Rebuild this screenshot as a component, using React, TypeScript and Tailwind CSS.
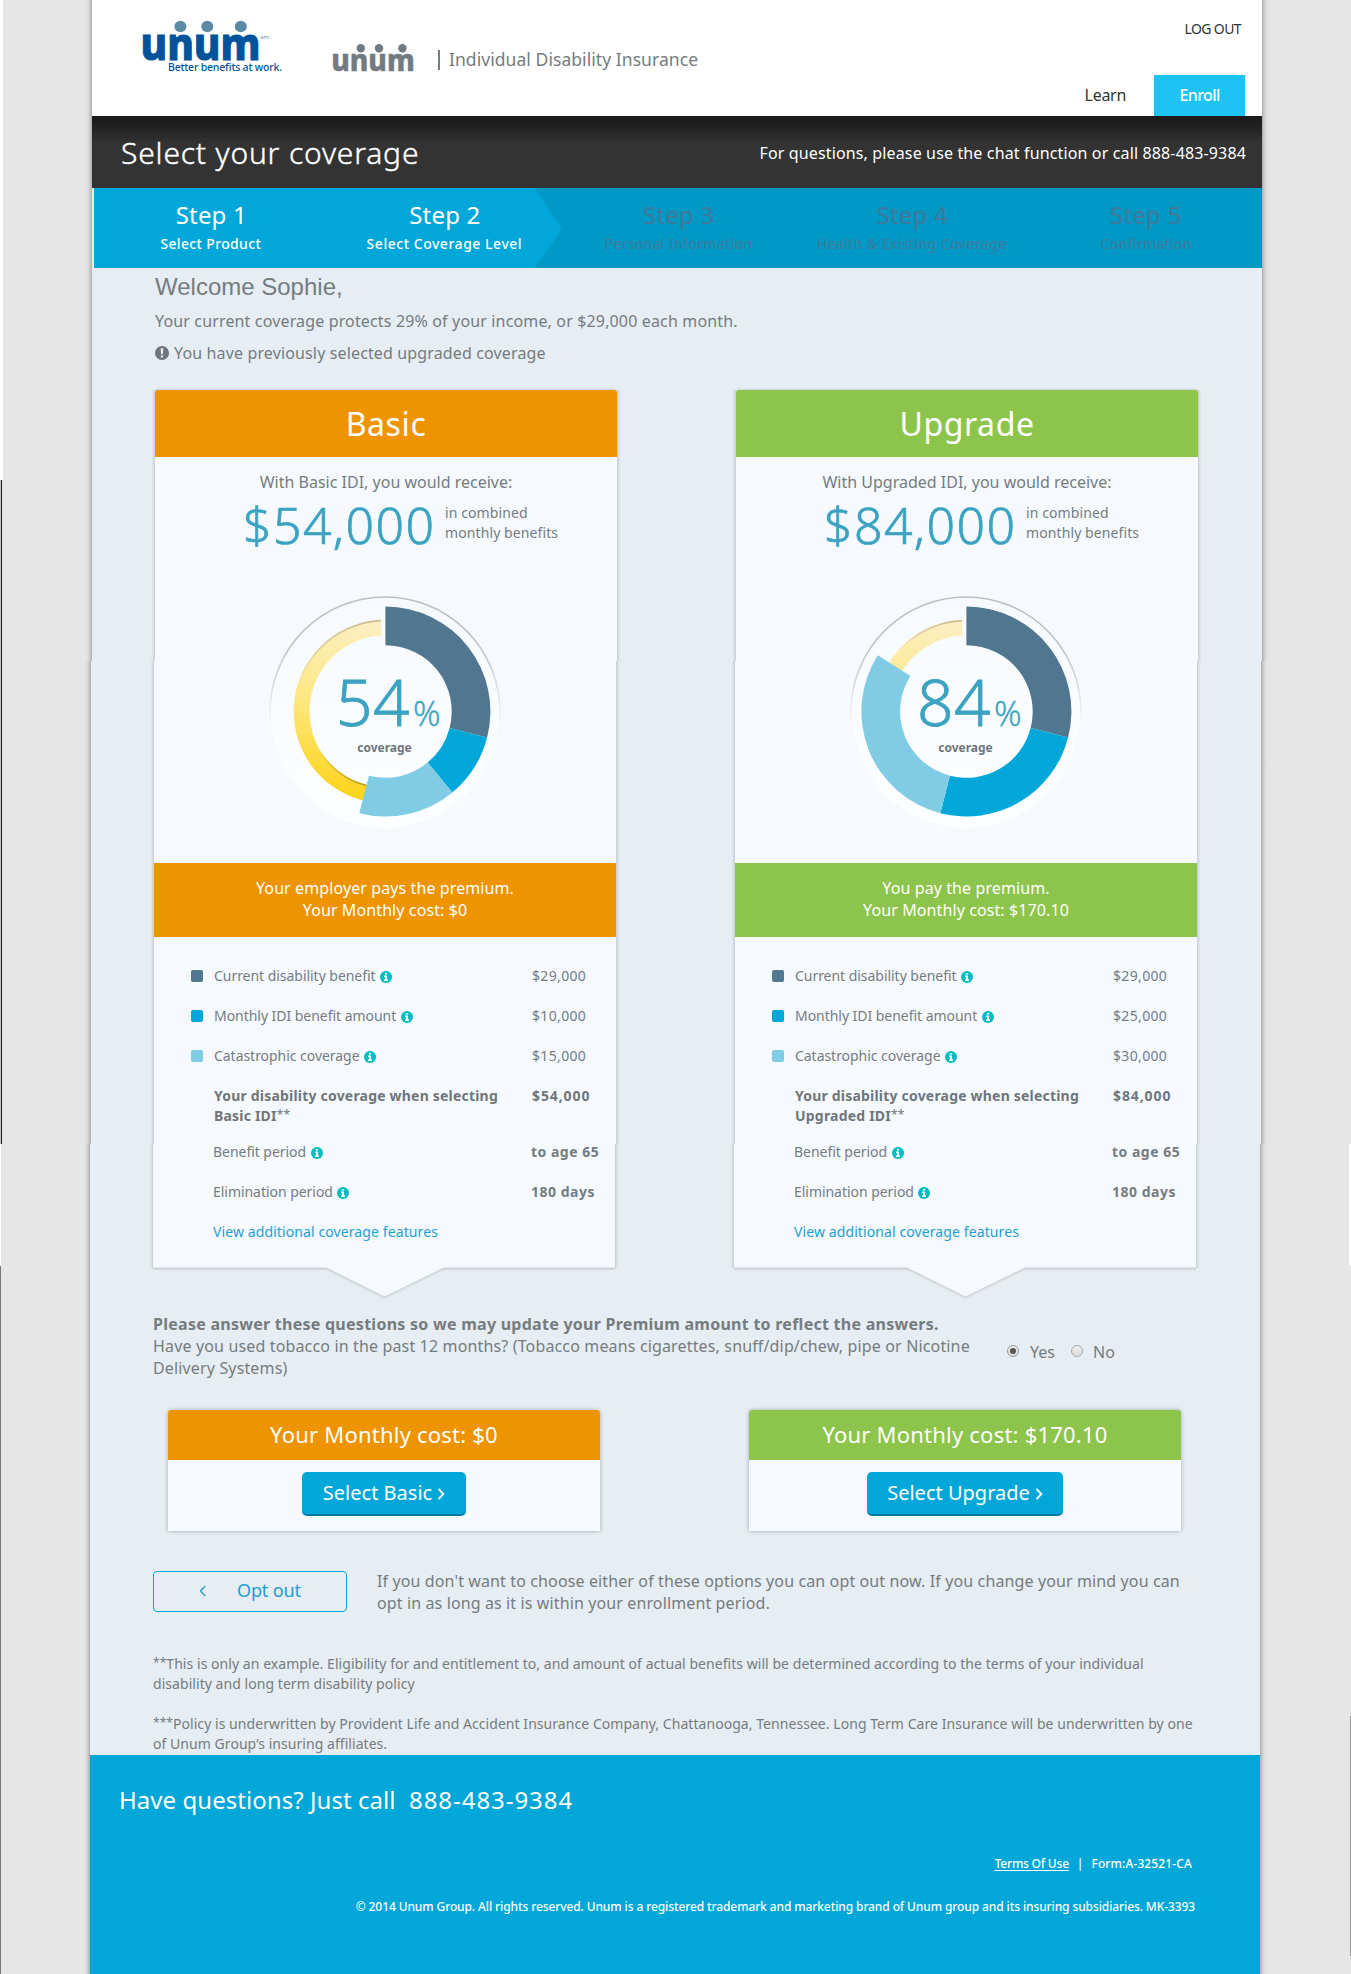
import React from "react";

type Plan = {
  id: string;
  name: string;
  receive: string;
  amount: string;
  percent: number;
  payer: string;
  cost: string;
  idi: string;
  catastrophic: string;
  coverageName: string;
  stops: [number, number];
  header: string;
};

const plans: Plan[] = [
  {
    id: "basic",
    name: "Basic",
    receive: "With Basic IDI, you would receive:",
    amount: "$54,000",
    percent: 54,
    payer: "Your employer pays the premium.",
    cost: "Your Monthly cost: $0",
    idi: "$10,000",
    catastrophic: "$15,000",
    coverageName: "Basic IDI",
    stops: [29, 39],
    header: "bg-[#ed9400]",
  },
  {
    id: "upgrade",
    name: "Upgrade",
    receive: "With Upgraded IDI, you would receive:",
    amount: "$84,000",
    percent: 84,
    payer: "You pay the premium.",
    cost: "Your Monthly cost: $170.10",
    idi: "$25,000",
    catastrophic: "$30,000",
    coverageName: "Upgraded IDI",
    stops: [29, 54],
    header: "bg-[#8dc44b]",
  },
];

const steps = [
  { title: "Step 1", text: "Select Product", tracking: "font-medium tracking-[0.35px]", active: true },
  { title: "Step 2", text: "Select Coverage Level", tracking: "font-medium tracking-[0.53px]", active: true },
  { title: "Step 3", text: "Personal Information", tracking: "pl-[1px] tracking-[0.38px]", active: false },
  { title: "Step 4", text: "Health & Existing Coverage", tracking: "tracking-[0.46px]", active: false },
  { title: "Step 5", text: "Confirmation", tracking: "pl-[2px] tracking-[0.34px]", active: false },
];

const pageShadow =
  "relative before:absolute before:inset-y-0 before:right-full before:w-[7px] before:bg-[linear-gradient(to_left,#acacac,#c9c9c9_2px,#dcdcdc_4px,#e6e6e6)] after:absolute after:inset-y-0 after:left-full after:w-[7px] after:bg-[linear-gradient(to_right,#acacac,#c9c9c9_2px,#dcdcdc_4px,#e6e6e6)]";
const cardShadow =
  "relative before:absolute before:inset-y-0 before:right-full before:w-[4px] before:bg-[linear-gradient(to_left,#c6ccd1,#dbe2e8_2px,#e6edf3)] after:absolute after:inset-y-0 after:left-full after:w-[4px] after:bg-[linear-gradient(to_right,#c6ccd1,#dbe2e8_2px,#e6edf3)]";

function point(cx: number, cy: number, r: number, pct: number) {
  const a = (pct / 100) * Math.PI * 2;
  return `${(cx + r * Math.sin(a)).toFixed(2)} ${(cy - r * Math.cos(a)).toFixed(2)}`;
}

function arc(cx: number, cy: number, ro: number, ri: number, from: number, to: number) {
  const large = to - from > 50 ? 1 : 0;
  return `M${point(cx, cy, ro, from)}A${ro} ${ro} 0 ${large} 1 ${point(cx, cy, ro, to)}L${point(cx, cy, ri, to)}A${ri} ${ri} 0 ${large} 0 ${point(cx, cy, ri, from)}Z`;
}

function Donut({ plan }: { plan: Plan }) {
  const cx = 120.4;
  const cy = 119.5;
  return (
    <div className="relative -mt-[69px] ml-[111px] h-[240px] w-[240px]">
      <svg width="240" height="240" viewBox="0 0 240 240" className="block">
        <defs>
          <linearGradient id={`disc-${plan.id}`} x1="0" y1="0" x2="0" y2="1">
            <stop offset="0" stopColor="#f6faff" />
            <stop offset="1" stopColor="#fdfeff" />
          </linearGradient>
          <linearGradient id={`rim-${plan.id}`} x1="0" y1="0" x2="0" y2="1">
            <stop offset="0" stopColor="#bcbfc2" />
            <stop offset="0.25" stopColor="#c6c9cc" />
            <stop offset="0.55" stopColor="#f6f8fa" />
            <stop offset="1" stopColor="#fdfeff" />
          </linearGradient>
          <linearGradient id={`gold-${plan.id}`} gradientUnits="userSpaceOnUse" x1="118" y1="28" x2="100" y2="211">
            <stop offset="0" stopColor="#fcefc6" />
            <stop offset="0.45" stopColor="#fde883" />
            <stop offset="1" stopColor="#fdd216" />
          </linearGradient>
          <linearGradient id={`edge-${plan.id}`} x1="0" y1="0" x2="0" y2="1">
            <stop offset="0" stopColor="#cbbd8d" />
            <stop offset="0.7" stopColor="#cbbd8d" stopOpacity="0" />
          </linearGradient>
          <linearGradient id={`inner-${plan.id}`} x1="0" y1="0" x2="0" y2="1">
            <stop offset="0.4" stopColor="#bb9f20" stopOpacity="0" />
            <stop offset="1" stopColor="#bb9f20" />
          </linearGradient>
        </defs>
        <circle cx="120" cy="120" r="115" fill={`url(#disc-${plan.id})`} stroke={`url(#rim-${plan.id})`} strokeWidth="1.7" />
        <path d={arc(cx, cy, 91.7, 76, plan.percent - 1, 99.2)} fill={`url(#gold-${plan.id})`} />
        <path
          d={`M${point(cx, cy, 91, Math.max(75, plan.percent))}A91 91 0 0 1 ${point(cx, cy, 91, 99.2)}`}
          fill="none"
          stroke={`url(#edge-${plan.id})`}
          strokeWidth="1.8"
        />
        {plan.percent < 60 && (
          <path
            d={`M${point(cx, cy, 76.5, 54)}A76.5 76.5 0 0 1 ${point(cx, cy, 76.5, 72)}`}
            fill="none"
            stroke={`url(#inner-${plan.id})`}
            strokeWidth="1.5"
          />
        )}
        <path d={arc(cx, cy, 105, 66.3, 0, plan.stops[0])} fill="#517690" />
        <path d={arc(cx, cy, 105, 66.3, plan.stops[0], plan.stops[1])} fill="#00a7d8" />
        <path d={arc(cx, cy, 105, 66.3, plan.stops[1], plan.percent)} fill="#80cce4" />
      </svg>
      <div className="absolute top-[84px] left-[71px] flex h-[52px] items-baseline leading-[52px] font-light text-[#3ba3c1]">
        <span className="text-[64px] tracking-[0.5px] [-webkit-text-stroke:0.8px_#3ba3c1]">{plan.percent}</span>
        <span className="ml-[3px] text-[34px] leading-[34px] [-webkit-text-stroke:0.3px_#3ba3c1]">%</span>
      </div>
      <div className="absolute top-[148px] left-0 w-[239px] text-center text-[12px] leading-[16px] font-bold text-[#6f777c]">
        coverage
      </div>
    </div>
  );
}

function InfoIcon() {
  return (
    <svg width="12" height="12" viewBox="0 0 12 12" className="ml-[4.5px] inline-block align-[-1.5px]">
      <circle cx="6" cy="6" r="6" fill="#00bcc3" />
      <path d="M5 1.9h2.1v1.7H5zM4.1 4.6h3v3.9h0.9v1.5H4V8.5h0.9V6H4.1z" fill="#fff" />
    </svg>
  );
}

function AlertIcon() {
  return (
    <svg width="14" height="14" viewBox="0 0 14 14" className="mr-[5px]">
      <circle cx="7" cy="7" r="7" fill="#6f767a" />
      <path d="M5.7 2.2h2.6L8 8.2H6zM5.9 9.4h2.2v2.2H5.9z" fill="#e6edf3" />
    </svg>
  );
}

function Row({
  swatch,
  label,
  value,
  bold,
}: {
  swatch?: string;
  label: string;
  value: string;
  bold?: boolean;
}) {
  return (
    <div className="flex h-[40px] items-start">
      <div className="flex h-[20px] w-[60px] items-center pl-[37px]">
        {swatch && <span className={`size-[12px] rounded-[2px] ${swatch}`} />}
      </div>
      <div className="flex-1 tracking-[-0.04px]">
        {label}
        <InfoIcon />
      </div>
      <div className={bold ? "w-[84px] font-bold tracking-[0.5px]" : "w-[84px] tracking-[0.34px]"}>{value}</div>
    </div>
  );
}

function Chevron({ className, flip }: { className: string; flip?: boolean }) {
  return (
    <svg width="8" height="12" viewBox="0 0 8 12" fill="none" stroke="currentColor" className={className}>
      <path d={flip ? "M6.2 1L1.5 6l4.7 5" : "M1.5 0.8L6.3 6l-4.8 5.2"} strokeWidth={flip ? 1.3 : 1.9} />
    </svg>
  );
}

function Logo() {
  return (
    <svg width="150" height="70" viewBox="0 0 150 70" className="block">
      <g fill="#5c8aa6">
        <ellipse cx="40.4" cy="14.5" rx="6" ry="5.8" />
        <ellipse cx="67.3" cy="14.5" rx="6" ry="5.8" />
        <ellipse cx="100.8" cy="14.5" rx="6" ry="5.8" />
      </g>
      <text x="0.5" y="47.5" fontSize="45" fontWeight="800" fill="#00539b" stroke="#00539b" strokeWidth="1" textLength="120" lengthAdjust="spacingAndGlyphs" fontFamily="Noto Sans">
        unum
      </text>
      <text x="120.5" y="26.5" fontSize="6" fill="#5c8aa6" fontFamily="Noto Sans">sm</text>
      <text x="28" y="58.5" fontSize="10.5" fontWeight="500" fill="#00539b" textLength="114" fontFamily="Noto Sans">
        Better benefits at work.
      </text>
    </svg>
  );
}

function GrayLogo() {
  return (
    <svg width="90" height="40" viewBox="0 0 90 40" className="block">
      <g fill="#737b82">
        <circle cx="28.8" cy="10.2" r="4.2" />
        <circle cx="47" cy="10.2" r="4.2" />
        <circle cx="70.4" cy="10.2" r="4.2" />
        <text x="-0.8" y="32.5" fontSize="30" fontWeight="800" stroke="#737b82" strokeWidth="0.5" textLength="83.5" lengthAdjust="spacingAndGlyphs" fontFamily="Noto Sans">
          unum
        </text>
      </g>
    </svg>
  );
}

export default function App() {
  return (
    <div className="relative h-[1974px] w-[1351px] overflow-hidden bg-[#e6e6e6] font-['Noto_Sans',sans-serif] text-[#757c80]">
      <div className="absolute top-0 left-0 h-[480px] w-[3px] bg-white" />
      <div className="absolute top-[480px] left-0 h-[664px] w-[2px] border-r border-[#1c1c1c] bg-[#c4c4c4]" />
      <div className="absolute top-[1144px] left-0 h-[122px] w-px bg-white" />
      <div className="absolute top-[1266px] left-0 h-[708px] w-px bg-[#777]" />
      <div className="absolute top-[1144px] right-0 h-[122px] w-[2px] bg-white" />
      <div className="absolute top-[1716px] right-0 h-[240px] w-px bg-[#999]" />

      <div className={`ml-[92px] h-[661px] w-[1170px] bg-[#e6edf3] ${pageShadow}`}>
        <header className="flex h-[116px] bg-white">
          <div className="pt-[12px] pl-[48px]">
            <Logo />
          </div>
          <div className="mt-[38px] ml-[42px]">
            <GrayLogo />
          </div>
          <div className="mt-[50px] ml-[16px] h-[20px] w-[2px] bg-[#757c80]" />
          <div className="mt-[48px] ml-[9px] text-[17.5px] leading-[22px] tracking-[0.06px]">
            Individual Disability Insurance
          </div>
          <div className="ml-auto flex flex-col items-end">
            <a className="mt-[19px] mr-[21px] text-[14px] leading-[20px] tracking-[-0.6px] text-[#333]">LOG OUT</a>
            <nav className="mt-[36px] mr-[17px] flex h-[41px] text-[16px] leading-[41px]">
              <a className="mr-[28px] tracking-[-0.3px] text-[#333]">Learn</a>
              <a className="w-[91px] bg-[#1dc3f3] text-center font-medium tracking-[-0.6px] text-white">Enroll</a>
            </nav>
          </div>
        </header>

        <div className="flex h-[72px] items-start justify-between bg-[#333] bg-[linear-gradient(#1a1a1a,#1e1e1e_8px,#333_28px)] pt-[17px] pr-[16px] pl-[29px] text-white">
          <h1 className="text-[30px] leading-[40px] font-light tracking-[0.82px] [-webkit-text-stroke:0.4px_#fff]">
            Select your coverage
          </h1>
          <p className="pt-[9px] text-[16px] leading-[22px] tracking-[0.14px]">
            For questions, please use the chat function or call 888-483-9384
          </p>
        </div>

        <div className="relative ml-[2px] h-[80px] bg-[#0098c5]">
          <div className="absolute inset-y-0 left-0 w-[468px] bg-[#00a7d8] [clip-path:polygon(0_0,441px_0,100%_41px,441px_100%,0_100%)]" />
          <ol className="relative grid grid-cols-5 text-center">
            {steps.map((s) => (
              <li key={s.title} className={s.active ? "pt-[13px] text-white" : "pt-[13px] text-[#41789a]"}>
                <div className="pl-px text-[24px] leading-[28px] tracking-[0.2px]">{s.title}</div>
                <div className={`mt-[5px] text-[14px] leading-[20px] whitespace-nowrap ${s.tracking}`}>{s.text}</div>
              </li>
            ))}
          </ol>
        </div>

        <div className="pl-[63px]">
          <h2 className="pt-[4px] font-['Liberation_Sans',sans-serif] text-[24px] leading-[30px]">
            Welcome Sophie,
          </h2>
          <p className="mt-[8px] text-[16px] leading-[22px] tracking-[0.15px]">
            Your current coverage protects 29% of your income, or $29,000 each month.
          </p>
          <p className="mt-[10px] flex items-center text-[16px] leading-[22px] tracking-[0.14px]">
            <AlertIcon />
            You have previously selected upgraded coverage
          </p>

          <div className="mt-[26px] flex h-[271px] gap-[119px]">
            {plans.map((p) => (
              <section key={p.id} className={`w-[462px] rounded-t-[3px] bg-[#f6faff] ${cardShadow}`}>
                <h3
                  className={`h-[67px] rounded-t-[3px] text-center text-[32px] leading-[67px] tracking-[0.6px] text-white shadow-[0_-1px_2px_rgba(0,0,0,0.12)] ${p.header}`}
                >
                  {p.name}
                </h3>
                <p className="pt-[14px] text-center text-[16px] leading-[22px]">{p.receive}</p>
                <div className="mt-[2px] flex pl-[88px]">
                  <div className="w-[202px] text-[50px] leading-[60px] font-light tracking-[1.4px] text-[#3ba3c1] [-webkit-text-stroke:0.7px_#3ba3c1]">
                    {p.amount}
                  </div>
                  <div className="pt-[8px] text-[14px] leading-[20px] tracking-[0.1px]">
                    in combined
                    <br />
                    monthly benefits
                  </div>
                </div>
              </section>
            ))}
          </div>
        </div>
      </div>

      <div className={`ml-[91px] h-[483px] w-[1170px] bg-[#e6edf3] pl-[63px] ${pageShadow}`}>
        <div className="flex h-[483px] gap-[119px]">
          {plans.map((p) => (
            <section key={p.id} className={`w-[462px] bg-[#f6faff] ${cardShadow}`}>
              <Donut plan={p} />
              <div
                className={`mt-[31px] h-[74px] pt-[14px] text-center text-[16px] leading-[22px] tracking-[0.1px] text-white ${p.header}`}
              >
                {p.payer}
                <br />
                {p.cost}
              </div>
              <div className="pt-[29px] text-[14px] leading-[20px]">
                <Row swatch="bg-[#517690]" label="Current disability benefit" value="$29,000" />
                <Row swatch="bg-[#00a7d8]" label="Monthly IDI benefit amount" value={p.idi} />
                <Row swatch="bg-[#80cce4]" label="Catastrophic coverage" value={p.catastrophic} />
                <div className="flex pl-[60px] font-bold text-[#6f767a]">
                  <div className="w-[318px] tracking-[0.2px]">
                    Your disability coverage when selecting
                    <br />
                    {p.coverageName}
                    <span className="align-[2px] text-[12px] leading-none font-normal">**</span>
                  </div>
                  <div className="tracking-[0.9px]">{p.amount}</div>
                </div>
              </div>
            </section>
          ))}
        </div>
      </div>

      <div className={`ml-[90px] h-[830px] w-[1170px] bg-[#e6edf3] ${pageShadow}`}>
        <div className="flex h-[124px] gap-[119px] pl-[63px]">
          {plans.map((p) => (
            <section
              key={p.id}
              className={`w-[462px] bg-[#f6faff] text-[14px] leading-[20px] ${cardShadow}`}
            >
              <div className="-mt-[2px]">
                <Row label="Benefit period" value="to age 65" bold />
                <Row label="Elimination period" value="180 days" bold />
                <a className="block pl-[60px] tracking-[0.1px] text-[#219fd2]">View additional coverage features</a>
              </div>
              <svg width="462" height="36" viewBox="0 0 462 36" className="absolute top-[120px] left-0">
                <path d="M0 4.6H174L231.6 33.4L290 4.6H462" fill="none" stroke="#000" strokeOpacity="0.04" strokeWidth="4" />
                <path d="M0 4.5H174L231.6 32.8L290 4.5H462" fill="none" stroke="#000" strokeOpacity="0.09" strokeWidth="1.4" />
                <path d="M174 0V4L231.6 32.5L290 4V0Z" fill="#f6faff" />
              </svg>
            </section>
          ))}
        </div>

        <div className="mt-[45px] flex pl-[63px] text-[16px] leading-[22px]">
          <div className="w-[854px]">
            <p className="font-bold tracking-[0.26px]">
              Please answer these questions so we may update your Premium amount to reflect the answers.
            </p>
            <p className="tracking-[0.15px]">
              Have you used tobacco in the past 12 months? (Tobacco means cigarettes, snuff/dip/chew, pipe or Nicotine
              <br />
              Delivery Systems)
            </p>
          </div>
          <div className="mt-[28px] flex h-[22px] items-center">
            <span className="mt-[-2px] flex size-[12px] items-center justify-center rounded-full border border-[#9a9a9a] bg-[linear-gradient(#eee,#dcdcdc)]">
              <span className="size-[6px] rounded-full bg-[#555]" />
            </span>
            <span className="ml-[11px] w-[41px]">Yes</span>
            <span className="mt-[-2px] size-[12px] rounded-full border border-[#a8a8a8] bg-[linear-gradient(#eee,#dcdcdc)]" />
            <span className="ml-[10px]">No</span>
          </div>
        </div>

        <div className="mt-[31px] flex gap-[149px] pl-[78px]">
          {plans.map((p) => (
            <section
              key={p.id}
              className="h-[121px] w-[432px] rounded-t-[3px] bg-[#f6faff] text-center shadow-[0_0_4px_rgba(0,0,0,0.28)]"
            >
              <div className={`h-[50px] rounded-t-[3px] text-[22px] leading-[48px] tracking-[0.22px] text-white ${p.header}`}>
                {p.cost}
              </div>
              <button className="mt-[12px] inline-flex h-[44px] min-w-[164px] items-start justify-center rounded-[5px] border-b-2 border-[#0079a5] bg-[#00a7d8] px-[20px] text-[20px] leading-[42px] text-white">
                Select {p.name}
                <Chevron className="mt-[16px] ml-[5px]" />
              </button>
            </section>
          ))}
        </div>

        <div className="mt-[39px] flex pl-[63px]">
          <button className="mt-px flex h-[41px] w-[194px] items-center rounded-[4px] border border-[#00a7d8] pb-[2px] pl-[45px] text-[18px] tracking-[-0.15px] text-[#219fd2]">
            <Chevron flip className="mr-[30px]" />
            Opt out
          </button>
          <p className="ml-[30px] text-[16px] leading-[22px] tracking-[0.12px]">
            If you don't want to choose either of these options you can opt out now. If you change your mind you can
            <br />
            opt in as long as it is within your enrollment period.
          </p>
        </div>

        <div className="mt-[40px] h-[101px] pl-[63px] text-[14px] leading-[20px] tracking-[0.05px]">
          <p>
            <span className="align-[2px] text-[12px] leading-none">**</span>This is only an example. Eligibility for and entitlement to, and amount of actual benefits will be determined according to the terms of your individual
            <br />
            disability and long term disability policy
          </p>
          <p className="mt-[20px]">
            <span className="align-[2px] text-[12px] leading-none">***</span>Policy is underwritten by Provident Life and Accident Insurance Company, Chattanooga, Tennessee. Long Term Care Insurance will be underwritten by one
            <br />
            of Unum Group’s insuring affiliates.
          </p>
        </div>

        <footer className="h-[221px] bg-[#00a7d8] pt-[30px] text-white">
          <div className="flex pl-[29px] text-[24px] leading-[30px]">
            <span className="w-[290px] tracking-[0.05px]">Have questions? Just call</span>
            <span className="tracking-[0.95px]">888-483-9384</span>
          </div>
          <div className="mt-[41px] flex justify-end pr-[68px] text-[12px] leading-[16px] font-medium">
            <a className="tracking-[-0.2px] underline underline-offset-2">Terms Of Use</a>
            <span className="mx-[8px]">|</span>
            <span className="tracking-[0.12px]">Form:A-32521-CA</span>
          </div>
          <p className="mt-[27px] pr-[65px] text-right text-[12px] leading-[16px] font-medium tracking-[-0.105px]">
            © 2014 Unum Group. All rights reserved. Unum is a registered trademark and marketing brand of Unum group and its insuring subsidiaries. MK-3393
          </p>
        </footer>
      </div>
    </div>
  );
}
